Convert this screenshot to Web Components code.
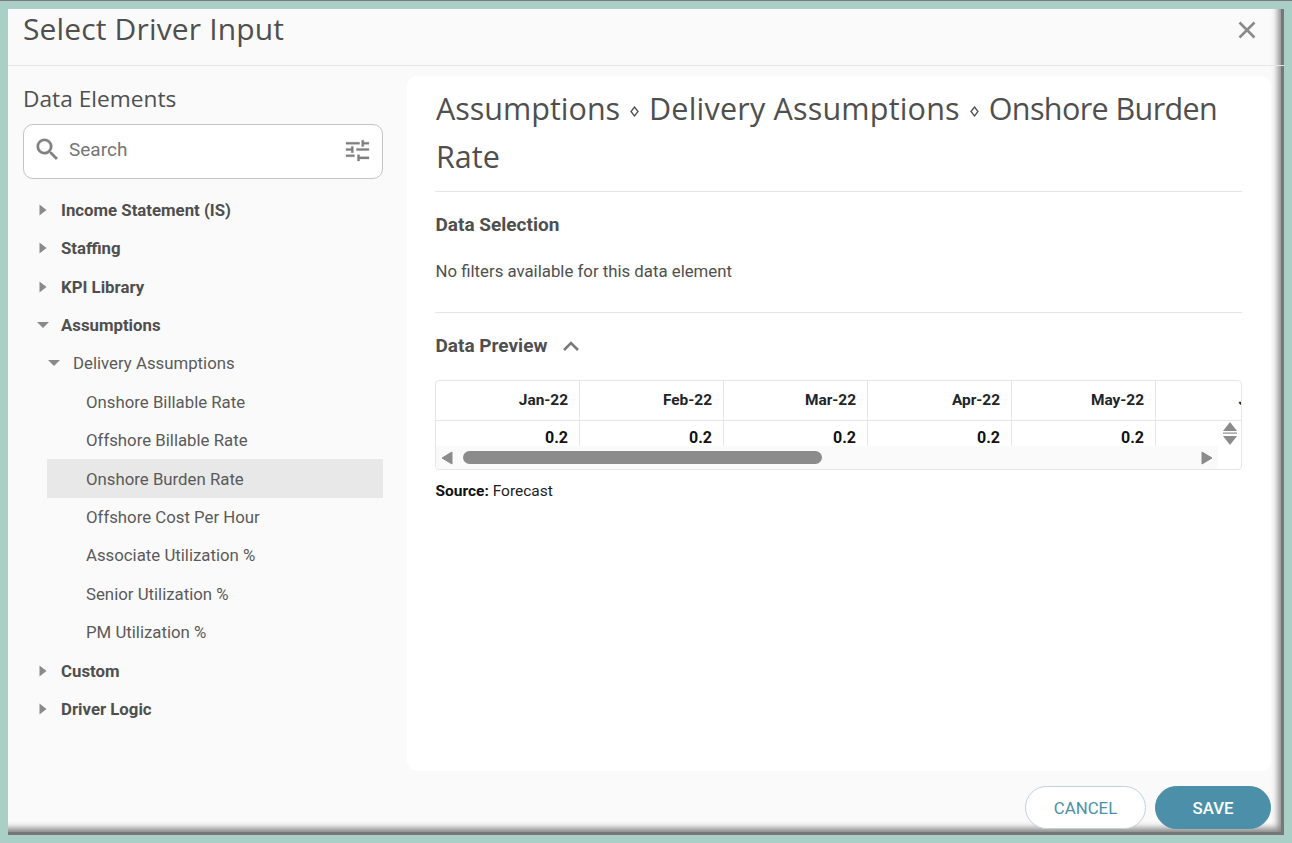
<!DOCTYPE html>
<html>
<head>
<meta charset="utf-8">
<title>Select Driver Input</title>
<style>
  html, body { margin: 0; height: 843px; overflow: hidden; background: #a9cfc7; }
  body { font-family: Roboto, sans-serif; }
</style>
</head>
<body>
<driver-dialog>
  <span slot="title">Select Driver Input</span>
  <element-tree slot="left"></element-tree>
  <element-detail slot="right"></element-detail>
  <pill-button slot="footer">CANCEL</pill-button>
  <pill-button slot="footer" primary>SAVE</pill-button>
</driver-dialog>

<script>
class DriverDialog extends HTMLElement {
  constructor() {
    super();
    this.attachShadow({ mode: 'open' });
  }

  connectedCallback() {
    this.shadowRoot.innerHTML = `
      <style>
        :host {
          display: block;
          height: 843px;
          box-sizing: border-box;
          border-top: 1px solid #7a7a7a;
          padding: 8px;
        }
        .box {
          height: 826px;
          background: #fafafa;
          display: flex;
          flex-direction: column;
          box-shadow: inset -3px -3px 0 #777, inset -8px -9px 6px -2px #888;
        }
        header {
          height: 57px;
          flex: none;
          box-sizing: border-box;
          border-bottom: 1px solid #e6e6e6;
          padding-left: 15px;
          display: flex;
          justify-content: space-between;
          color: #4f4f4f;
          font: 400 30px/40px "Open Sans", sans-serif;
          letter-spacing: .15px;
        }
        .close {
          width: 20px;
          height: 20px;
          margin: 11px 27px 0 0;
          color: #8a8a8a;
        }
        .main {
          height: 705px;
          flex: none;
          display: flex;
          padding: 10px 13px 0 15px;
          box-sizing: border-box;
        }
        .left { width: 360px; flex: none; margin-right: 24px; }
        .right { flex: 1; min-width: 0; }
        footer {
          display: flex;
          justify-content: flex-end;
          gap: 9px;
          padding: 15px 13px 0 0;
        }
      </style>
      <div class="box">
        <header>
          <slot name="title"></slot>
          <svg class="close" viewBox="0 0 20 20"><path d="M2.5 2.5L17.5 17.5M17.5 2.5L2.5 17.5" stroke="currentColor" stroke-width="2.6" fill="none"/></svg>
        </header>
        <div class="main">
          <div class="left"><slot name="left"></slot></div>
          <div class="right"><slot name="right"></slot></div>
        </div>
        <footer><slot name="footer"></slot></footer>
      </div>
    `;
  }
}
customElements.define('driver-dialog', DriverDialog);

class PillButton extends HTMLElement {
  constructor() {
    super();
    this.attachShadow({ mode: 'open' });
  }

  connectedCallback() {
    this.shadowRoot.innerHTML = `
      <style>
        :host {
          display: flex;
          align-items: center;
          justify-content: center;
          box-sizing: border-box;
          width: 121px;
          height: 43px;
          border-radius: 22px;
          border: 1px solid #bcd3de;
          background: #fff;
          color: #4b90a8;
          font: 400 16.8px Roboto, sans-serif;
        }
        :host([primary]) {
          width: 116px;
          border-color: #4b90a8;
          background: #4b90a8;
          color: #fff;
          font-weight: 500;
        }
      </style>
      <slot></slot>
    `;
  }
}
customElements.define('pill-button', PillButton);

class SearchBox extends HTMLElement {
  constructor() {
    super();
    this.attachShadow({ mode: 'open' });
  }

  connectedCallback() {
    this.shadowRoot.innerHTML = `
      <style>
        :host {
          display: flex;
          align-items: center;
          box-sizing: border-box;
          height: 55px;
          background: #fff;
          border: 1px solid #c4c4c4;
          border-radius: 10px;
          padding: 0 12px 4px 9px;
          color: #757575;
          font: 400 19px Roboto, sans-serif;
        }
        .glass { width: 29px; height: 29px; margin-right: 7px; }
        .text { flex: 1; }
        .tune { width: 25px; height: 25px; }
      </style>
      <svg class="glass" viewBox="0 0 24 24"><path fill="#808080" stroke="#808080" stroke-width=".3" d="M15.5 14h-.79l-.28-.27A6.47 6.47 0 0 0 16 9.5 6.5 6.5 0 1 0 9.5 16c1.61 0 3.09-.59 4.23-1.57l.27.28v.79l5 4.99L20.49 19l-4.99-5zm-6 0C7.01 14 5 11.99 5 9.5S7.01 5 9.5 5 14 7.01 14 9.5 11.99 14 9.5 14z"/></svg>
      <span class="text">Search</span>
      <svg class="tune" viewBox="0 0 24 24"><path fill="#7f7f7f" stroke="#7f7f7f" stroke-width=".3" d="M1 17v2h8v-2H1zM1 5v2h13V5H1zm13 18v-2h9v-2h-9v-2h-2v6h2zM6 9v2H1v2h5v2h2V9H6zm17 4v-2H11v2h12zM16 9h2V7h5V5h-5V3h-2v6z"/></svg>
    `;
  }
}
customElements.define('search-box', SearchBox);

class TreeRow extends HTMLElement {
  constructor() {
    super();
    this.attachShadow({ mode: 'open' });
  }

  connectedCallback() {
    const level = Number(this.getAttribute('level') || 0);
    const state = this.getAttribute('state');
    const arrows = {
      closed: '<svg width="8" height="12" viewBox="0 0 8 12"><path d="M0.5 0.5L7.5 6L0.5 11.5Z" fill="#8a8a8a"/></svg>',
      open: '<svg width="12" height="6" viewBox="0 0 12 6"><path d="M0 0H12L6 6Z" fill="#8a8a8a"/></svg>'
    };
    const arrowLeft = [13.5, 25][level];
    const textLeft = [12.5, 13, 63][level];
    this.shadowRoot.innerHTML = `
      <style>
        :host {
          display: flex;
          align-items: center;
          height: 38.4px;
          color: #5a5a5a;
          font: 400 16.8px Roboto, sans-serif;
        }
        :host([level="0"]) { font-weight: 700; color: #4f4f4f; }
        :host([selected]) { background: linear-gradient(to right, transparent 24px, #e8e8e8 24px); }
        .arrow { width: 12px; display: flex; justify-content: center; margin-left: ${arrowLeft}px; }
        .text { margin-left: ${textLeft}px; }
      </style>
      ${state ? `<span class="arrow">${arrows[state]}</span>` : ''}
      <span class="text"><slot></slot></span>
    `;
  }
}
customElements.define('tree-row', TreeRow);

class ElementTree extends HTMLElement {
  constructor() {
    super();
    this.attachShadow({ mode: 'open' });
  }

  connectedCallback() {
    this.shadowRoot.innerHTML = `
      <style>
        :host { display: block; }
        h3 {
          margin: 9px 0 12px;
          color: #4f4f4f;
          font: 400 22.7px/27px "Open Sans", sans-serif;
        }
        .rows { margin-top: 11.7px; }
      </style>
      <h3>Data Elements</h3>
      <search-box></search-box>
      <div class="rows">
        <tree-row level="0" state="closed">Income Statement (IS)</tree-row>
        <tree-row level="0" state="closed">Staffing</tree-row>
        <tree-row level="0" state="closed">KPI Library</tree-row>
        <tree-row level="0" state="open">Assumptions</tree-row>
        <tree-row level="1" state="open">Delivery Assumptions</tree-row>
        <tree-row level="2">Onshore Billable Rate</tree-row>
        <tree-row level="2">Offshore Billable Rate</tree-row>
        <tree-row level="2" selected>Onshore Burden Rate</tree-row>
        <tree-row level="2">Offshore Cost Per Hour</tree-row>
        <tree-row level="2">Associate Utilization %</tree-row>
        <tree-row level="2">Senior Utilization %</tree-row>
        <tree-row level="2">PM Utilization %</tree-row>
        <tree-row level="0" state="closed">Custom</tree-row>
        <tree-row level="0" state="closed">Driver Logic</tree-row>
      </div>
    `;
  }
}
customElements.define('element-tree', ElementTree);

class PreviewGrid extends HTMLElement {
  constructor() {
    super();
    this.attachShadow({ mode: 'open' });
  }

  connectedCallback() {
    const months = ['Jan-22', 'Feb-22', 'Mar-22', 'Apr-22', 'May-22', 'Jun-22'];
    const head = months.map(m => `<div class="cell head">${m}</div>`).join('');
    const vals = months.map((m, i) => `<div class="cell val">${i < 5 ? '0.2' : ''}</div>`).join('');
    this.shadowRoot.innerHTML = `
      <style>
        :host {
          display: block;
          position: relative;
          box-sizing: border-box;
          height: 90px;
          border: 1px solid #e6e6e6;
          border-radius: 4px;
          overflow: hidden;
          background: #fff;
          color: #212529;
          font: 700 15.4px Roboto, sans-serif;
        }
        .grid {
          display: grid;
          grid-template-columns: repeat(6, 144px);
          grid-template-rows: 40px 25px;
          width: 864px;
          height: 65px;
          overflow: hidden;
        }
        .cell {
          box-sizing: border-box;
          text-align: right;
          padding-right: 11px;
          border-right: 1px solid #e6e6e6;
        }
        .head { line-height: 38px; border-bottom: 1px solid #e6e6e6; }
        .val { line-height: 34px; font-size: 16px; color: #111; }
        .bar {
          height: 23px;
          width: 782px;
          background: #fafafa;
          position: relative;
        }
        .bar svg { position: absolute; top: 5px; width: 12px; height: 14px; }
        .thumb {
          position: absolute;
          left: 27px;
          top: 5px;
          width: 359px;
          height: 13px;
          border-radius: 7px;
          background: #8b8b8b;
        }
        .updown {
          position: absolute;
          right: 4px;
          top: 40px;
          width: 14px;
          height: 25px;
        }
      </style>
      <div class="grid">${head}${vals}</div>
      <div class="bar">
        <svg style="left:5px" viewBox="0 0 12 14"><path d="M11 1V13L1 7Z" fill="#8b8b8b" stroke="#8b8b8b" stroke-linejoin="round"/></svg>
        <div class="thumb"></div>
        <svg style="left:765px" viewBox="0 0 12 14"><path d="M1 1V13L11 7Z" fill="#8b8b8b" stroke="#8b8b8b" stroke-linejoin="round"/></svg>
      </div>
      <svg class="updown" viewBox="0 0 14 25">
        <path d="M7 1L14 10H0Z" fill="#8b8b8b"/>
        <rect x="0" y="11.5" width="14" height="1.2" fill="#8b8b8b"/>
        <path d="M0 15H14L7 24Z" fill="#8b8b8b"/>
      </svg>
    `;
  }
}
customElements.define('preview-grid', PreviewGrid);

class ElementDetail extends HTMLElement {
  constructor() {
    super();
    this.attachShadow({ mode: 'open' });
  }

  connectedCallback() {
    const sep = '<svg class="sep" viewBox="0 0 9 11"><path d="M4.5 1L8 5.5L4.5 10L1 5.5Z" fill="none" stroke="#4f4f4f" stroke-width="1.3"/></svg>';
    this.shadowRoot.innerHTML = `
      <style>
        :host {
          display: block;
          box-sizing: border-box;
          height: 695px;
          background: #fff;
          border-radius: 10px;
          padding: 8px 29px 0 28px;
          color: #4f4f4f;
          font: 400 16.8px Roboto, sans-serif;
        }
        h2 {
          margin: 0;
          padding: 0 0 11px 1px;
          border-bottom: 1px solid #e6e6e6;
          font: 400 30.5px/48px "Open Sans", sans-serif;
        }
        .sep { width: 9px; height: 11px; margin: 0 2px; vertical-align: 3px; }
        .mid { letter-spacing: .2px; }
        .last { letter-spacing: -.6px; }
        h4 { margin: 0; padding-left: .5px; font: 700 19px/24px Roboto, sans-serif; }
        .sel { padding: 21px 0 29px; border-bottom: 1px solid #e6e6e6; }
        .sel p { margin: 22px 0 0; padding-left: .5px; line-height: 24px; }
        .prev { display: flex; align-items: center; gap: 15px; margin: 21px 0 22px; }
        .prev svg { width: 18px; height: 12px; }
        .source { margin-top: 11px; padding-left: .5px; color: #212121; font-size: 15.5px; line-height: 20px; }
        .source b { color: #111; }
      </style>
      <h2><span>Assumptions</span> ${sep} <span class="mid">Delivery Assumptions</span> ${sep} <span class="last">Onshore Burden</span><br><span>Rate</span></h2>
      <div class="sel">
        <h4>Data Selection</h4>
        <p>No filters available for this data element</p>
      </div>
      <div class="prev">
        <h4>Data Preview</h4>
        <svg viewBox="0 0 18 12"><path d="M2 10L9 3L16 10" stroke="#7a7a7a" stroke-width="2.6" fill="none"/></svg>
      </div>
      <preview-grid></preview-grid>
      <div class="source"><b>Source:</b> Forecast</div>
    `;
  }
}
customElements.define('element-detail', ElementDetail);
</script>
</body>
</html>
